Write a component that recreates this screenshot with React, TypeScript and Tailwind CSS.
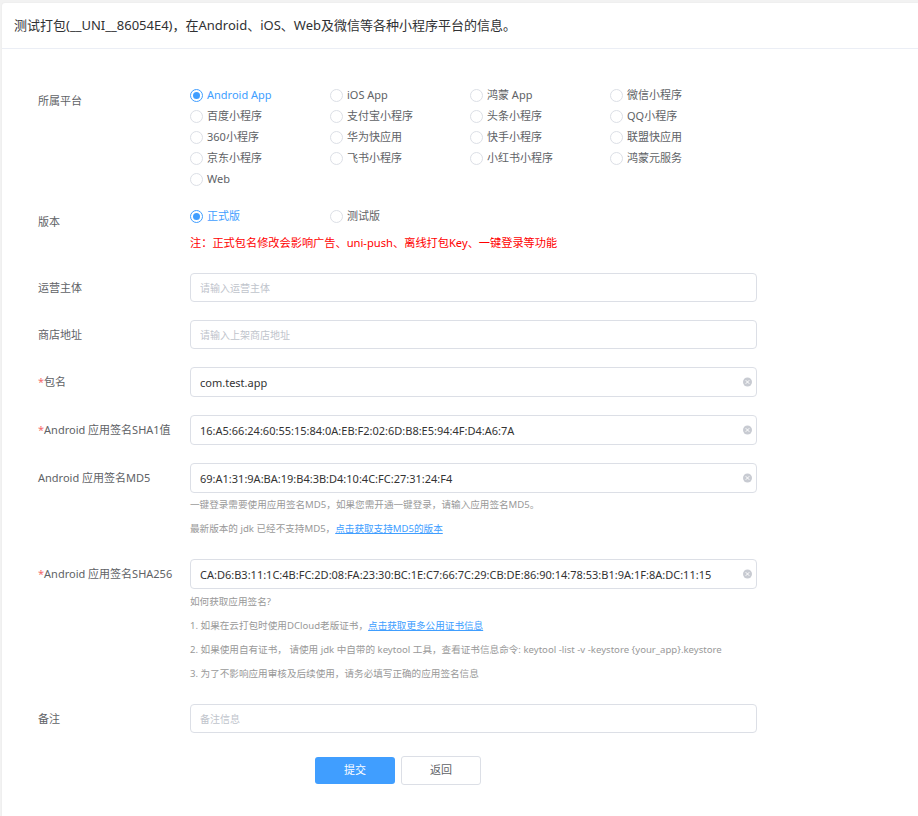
import React, { useState } from 'react';

const platforms = [
  'Android App', 'iOS App', '鸿蒙 App', '微信小程序',
  '百度小程序', '支付宝小程序', '头条小程序', 'QQ小程序',
  '360小程序', '华为快应用', '快手小程序', '联盟快应用',
  '京东小程序', '飞书小程序', '小红书小程序', '鸿蒙元服务',
  'Web',
];

const Radio = ({ label, checked, onClick }: any) => (
  <div className="flex items-center h-[21px] cursor-pointer" onClick={onClick}>
    <span
      className={`w-[13px] h-[13px] rounded-full border flex items-center justify-center mr-[4px] ${
        checked ? 'border-[#409eff]' : 'border-[#dcdfe6]'
      }`}
    >
      {checked && <span className="w-[7px] h-[7px] rounded-full bg-[#409eff]" />}
    </span>
    <span className={`text-[11px] ${checked ? 'text-[#409eff]' : 'text-[#606266]'}`}>{label}</span>
  </div>
);

const Label = ({ children, required, className = '' }: any) => (
  <div className={`w-[152px] shrink-0 text-[11px] text-[#606266] ${className}`}>
    {required && <span className="text-[#f56c6c]">*</span>}
    {children}
  </div>
);

const Field = ({ value, placeholder, h = 'h-[30px]' }: any) => (
  <div className={`relative w-[567px] ${h}`}>
    <input
      readOnly
      defaultValue={value}
      placeholder={placeholder}
      className={`w-full h-full rounded-[4px] border border-[#dcdfe6] bg-white pl-[9px] pr-[24px] outline-none ${
        value ? 'text-[11px] text-[#333]' : 'text-[10px] placeholder:text-[#c0c4cc]'
      }`}
    />
    {value && (
      <span className="absolute right-[5px] top-1/2 -translate-y-1/2 w-[9px] h-[9px] rounded-full bg-[#c8cbd2] flex items-center justify-center">
        <svg width="5" height="5" viewBox="0 0 5 5">
          <path d="M1 1L4 4M4 1L1 4" stroke="#fff" strokeWidth="1" strokeLinecap="round" />
        </svg>
      </span>
    )}
  </div>
);

const Help = ({ children }: any) => (
  <p className="text-[9.6px] leading-[24px] text-[#999]">{children}</p>
);

const Link = ({ children }: any) => (
  <a className="text-[#409eff] underline cursor-pointer">{children}</a>
);

export default function App() {
  const [platform, setPlatform] = useState('Android App');
  const [version, setVersion] = useState('正式版');

  return (
    <div
      className="min-h-[816px] bg-[#f2f2f2] pt-[3px] pl-[2px] overflow-hidden"
      style={{ fontFamily: '"Noto Sans", "Noto Sans CJK SC", sans-serif' }}
    >
      <div className="bg-white rounded-tl-[3px] min-h-[813px] shadow-[0_0_2px_rgba(0,0,0,0.06)]">
        {/* header */}
        <div className="h-[46px] flex items-center pl-[12px] border-b border-[#ebeef5]">
          <h1 className="text-[13px] text-[#303133]">
            测试打包(__UNI__86054E4)，在Android、iOS、Web及微信等各种小程序平台的信息。
          </h1>
        </div>

        <div className="pl-[36px] pt-[36px]">
          {/* 所属平台 */}
          <div className="flex">
            <Label className="pt-[5px] leading-[21px]">所属平台</Label>
            <div className="grid grid-cols-[140px_140px_140px_140px]">
              {platforms.map(p => (
                <Radio key={p} label={p} checked={platform === p} onClick={() => setPlatform(p)} />
              ))}
            </div>
          </div>

          {/* 版本 */}
          <div className="flex mt-[16px]">
            <Label className="pt-[5px] leading-[21px]">版本</Label>
            <div>
              <div className="grid grid-cols-[140px_140px]">
                {['正式版', '测试版'].map(v => (
                  <Radio key={v} label={v} checked={version === v} onClick={() => setVersion(v)} />
                ))}
              </div>
              <p className="text-[11.2px] leading-[21px] text-[#ff0000] mt-[5px]">
                注：正式包名修改会影响广告、uni-push、离线打包Key、一键登录等功能
              </p>
            </div>
          </div>

          <div className="flex flex-col gap-[18px] mt-[20px]">
            <div className="flex items-center">
              <Label className="pt-[2px]">运营主体</Label>
              <Field placeholder="请输入运营主体" h="h-[29px]" />
            </div>
            <div className="flex items-center">
              <Label className="pt-[2px]">商店地址</Label>
              <Field placeholder="请输入上架商店地址" h="h-[29px]" />
            </div>
            <div className="flex items-center">
              <Label required>包名</Label>
              <Field value="com.test.app" />
            </div>
            <div className="flex items-center">
              <Label required>Android 应用签名SHA1值</Label>
              <Field value="16:A5:66:24:60:55:15:84:0A:EB:F2:02:6D:B8:E5:94:4F:D4:A6:7A" />
            </div>
            <div className="flex items-start">
              <Label className="leading-[30px]">Android 应用签名MD5</Label>
              <div>
                <Field value="69:A1:31:9A:BA:19:B4:3B:D4:10:4C:FC:27:31:24:F4" />
                <Help>一键登录需要使用应用签名MD5，如果您需开通一键登录，请输入应用签名MD5。</Help>
                <Help>
                  最新版本的 jdk 已经不支持MD5，<Link>点击获取支持MD5的版本</Link>
                </Help>
              </div>
            </div>
            <div className="flex items-start">
              <Label required className="leading-[30px]">Android 应用签名SHA256</Label>
              <div>
                <Field value="CA:D6:B3:11:1C:4B:FC:2D:08:FA:23:30:BC:1E:C7:66:7C:29:CB:DE:86:90:14:78:53:B1:9A:1F:8A:DC:11:15" />
                <div className="pt-[1px]">
                  <Help>如何获取应用签名?</Help>
                  <Help>
                    1. 如果在云打包时使用DCloud老版证书，<Link>点击获取更多公用证书信息</Link>
                  </Help>
                  <Help>
                    2. 如果使用自有证书， 请使用 jdk 中自带的 keytool 工具，查看证书信息命令: keytool -list -v -keystore {'{your_app}'}.keystore
                  </Help>
                  <Help>3. 为了不影响应用审核及后续使用，请务必填写正确的应用签名信息</Help>
                </div>
              </div>
            </div>
            <div className="flex items-center">
              <Label className="pt-[2px]">备注</Label>
              <Field placeholder="备注信息" h="h-[29px]" />
            </div>
          </div>

          {/* buttons */}
          <div className="flex items-center gap-[6px] mt-[23px] ml-[277px]">
            <button className="w-[80px] h-[27px] rounded-[3px] bg-[#409eff] text-white text-[11px]">提交</button>
            <button className="w-[80px] h-[29px] rounded-[3px] border border-[#dcdfe6] bg-white text-[#606266] text-[11px]">返回</button>
          </div>
        </div>
      </div>
    </div>
  );
}
